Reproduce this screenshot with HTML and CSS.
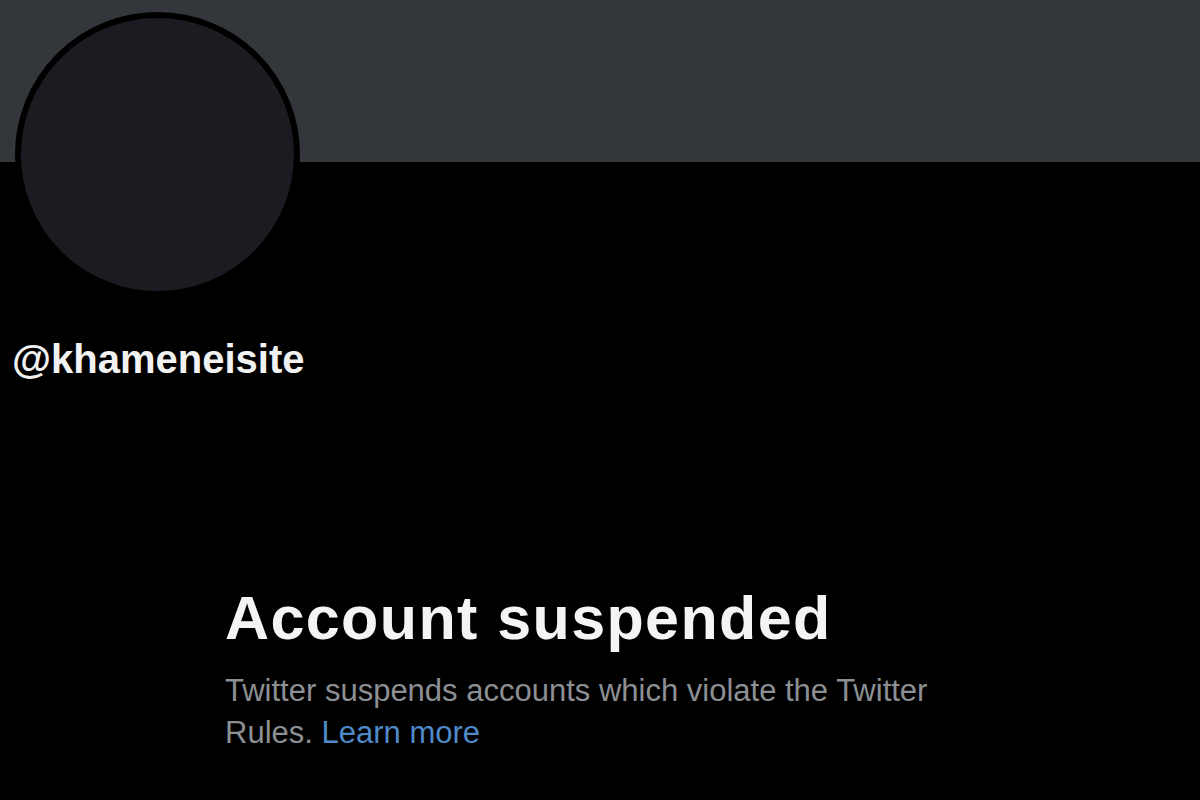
FILE: index.html
```html
<!DOCTYPE html>
<html lang="en">
<head>
    <meta charset="UTF-8">
    <meta name="viewport" content="width=device-width, initial-scale=1.0">
    <title>@khameneisite</title>
    <link rel="stylesheet" href="styles.css">
</head>
<body>
    <div class="banner"></div>
    <div class="profile">
        <div class="avatar"></div>
        <div class="handle">@khameneisite</div>
    </div>
    <div class="notice">
        <h1>Account suspended</h1>
        <p>Twitter suspends accounts which violate the Twitter Rules. <a href="#">Learn more</a></p>
    </div>
</body>
</html>
```

FILE: styles.css
```css
body {
    margin: 0;
    background-color: #000;
    font-family: "Liberation Sans", Arial, sans-serif;
    color: #e7e9ea;
}
.banner {
    height: 162px;
    background-color: #33363a;
}
.profile {
    padding-left: 12px;
}
.avatar {
    width: 285px;
    height: 285px;
    margin-top: -150px;
    margin-left: 3px;
    box-sizing: border-box;
    border: 6px solid #000;
    border-radius: 50%;
    background-color: #1a1c22;
}
.handle {
    margin-top: 38px;
    font-size: 40px;
    line-height: 48px;
    font-weight: bold;
    color: #f2f2f2;
}
.notice {
    margin-top: 199px;
    padding-left: 225px;
    max-width: 720px;
}
.notice h1 {
    margin: 0;
    font-size: 61px;
    line-height: 72px;
    font-weight: bold;
    letter-spacing: 1.4px;
    color: #f4f4f4;
}
.notice p {
    margin: 16px 0 0;
    font-size: 31px;
    line-height: 42px;
    color: #8c8f93;
}
.notice a {
    color: #4f8ac8;
    text-decoration: none;
}
```
